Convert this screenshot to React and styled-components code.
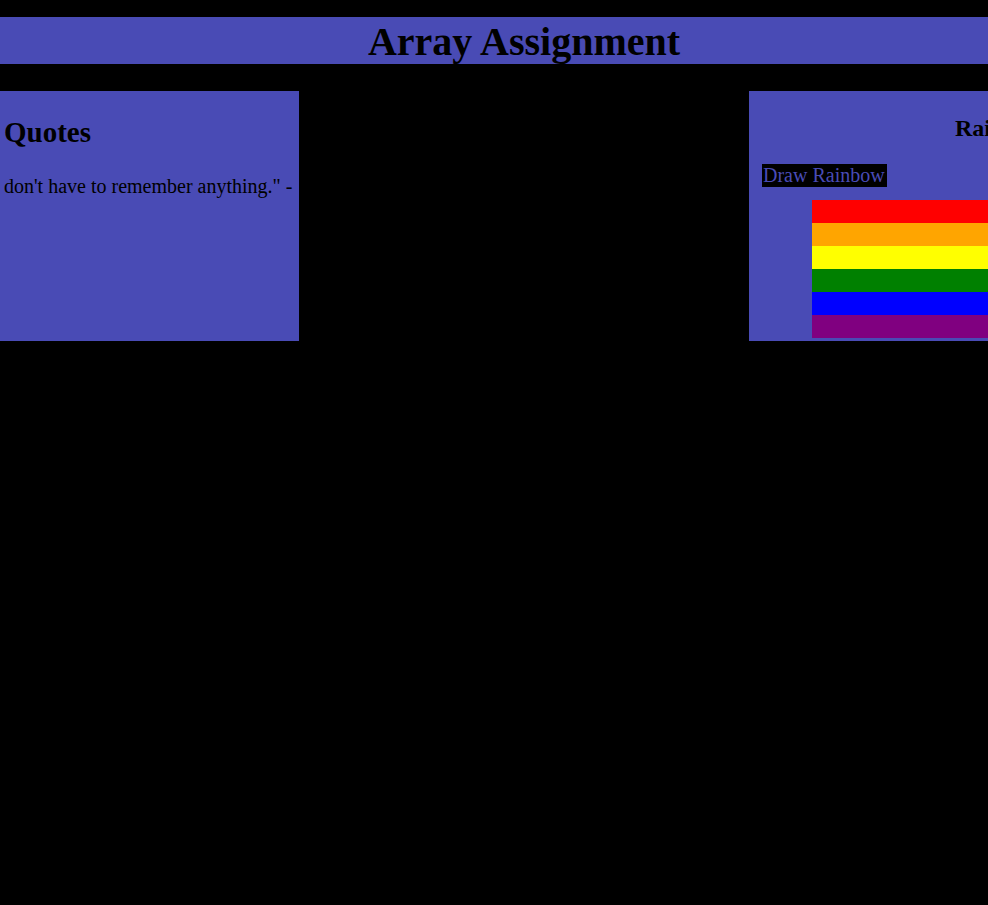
import styled, { createGlobalStyle } from "styled-components"

const PanelBlue = "#494bb5"
const rainbow = ["red", "orange", "yellow", "green", "blue", "purple"]

const GlobalStyle = createGlobalStyle`
body{
    margin:0;
    background:black;
    overflow:hidden;
    font-family:"Liberation Serif", "Times New Roman", serif;
}
`

const App = () => {
    return (
        <>
        <GlobalStyle/>
        <Page>
            <Header>Array Assignment</Header>
            <Columns>
                <QuotesPanel>
                    <QuotesTitle>Quotes</QuotesTitle>
                    <QuoteText>don't have to remember anything." -</QuoteText>
                </QuotesPanel>
                <RainbowPanel>
                    <RainbowTitle>Rainbow</RainbowTitle>
                    <DrawButton>Draw Rainbow</DrawButton>
                    <Stripes>
                        {rainbow.map((c)=>(
                            <Stripe key={c} color={c}/>
                        ))}
                    </Stripes>
                </RainbowPanel>
            </Columns>
        </Page>
        </>
    )
}

//styling starts----------------------------------------
const Page = styled.div`
width:1048px;
padding-top:17px;
`

const Header = styled.h1`
margin:0;
padding-top:3px;
background-color:${PanelBlue};
color:black;
font-size:40px;
font-weight:bold;
line-height:44px;
text-align:center;
`

const Columns = styled.div`
display:flex;
gap:450px;
margin-top:27px;
`

const Panel = styled.div`
flex:0 0 auto;
height:250px;
background-color:${PanelBlue};
overflow:hidden;
`

const QuotesPanel = styled(Panel)`
width:299px;
padding:0 4px;
box-sizing:border-box;
`

const QuotesTitle = styled.h2`
margin:25px 0 26px 0;
font-size:29px;
line-height:33px;
`

const QuoteText = styled.p`
margin:0;
font-size:20px;
line-height:23px;
white-space:nowrap;
`

const RainbowPanel = styled(Panel)`
width:504px;
padding:0 13px;
box-sizing:border-box;
`

const RainbowTitle = styled.h3`
margin:23px 0 22px 0;
font-size:24px;
line-height:28px;
text-align:center;
`

const DrawButton = styled.button`
display:block;
background:black;
color:${PanelBlue};
border:none;
padding:0 2px 0 1px;
margin:0;
font-family:inherit;
font-size:20px;
line-height:23px;
`

const Stripes = styled.div`
display:flex;
flex-direction:column;
margin:13px 0 0 50px;
width:380px;
`

const Stripe = styled.div`
height:23px;
background-color:${(p)=>p.color};
`

export default App
